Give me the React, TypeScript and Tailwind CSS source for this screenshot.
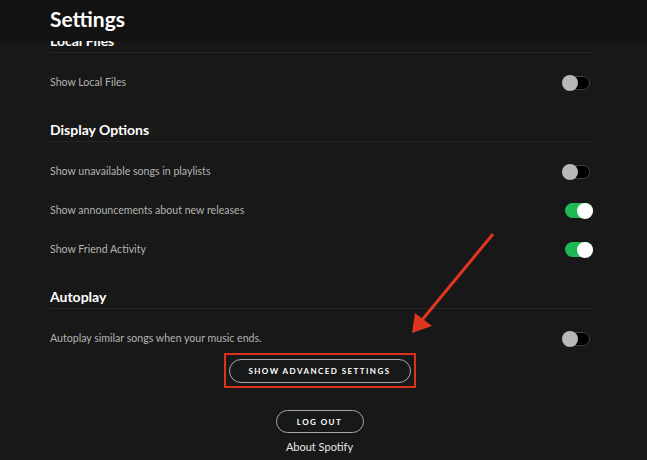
import React from "react";

const Toggle = ({ on }: { on: boolean }) =>
  on ? (
    <div className="relative w-[28px] h-[15px] rounded-full bg-[#1db954]">
      <div className="absolute right-0 top-[-0.5px] w-[16px] h-[16px] rounded-full bg-white" />
    </div>
  ) : (
    <div className="relative mr-[3px] w-[27px] h-[14px] rounded-full bg-black border border-[#3e3e3e]">
      <div className="absolute left-[-2px] top-[-2px] w-[16px] h-[16px] rounded-full bg-[#b8b8b8]" />
    </div>
  );

const Heading = ({ title, className = "" }: { title: string; className?: string }) => (
  <div className={`border-b border-[#262626] pb-[2px] ${className}`}>
    <h2 className="text-[14px] leading-[18px] font-bold text-white">{title}</h2>
  </div>
);

const Row = ({ label, on }: { label: string; on: boolean }) => (
  <div className="flex items-center justify-between h-[39px]">
    <span className="text-[10.6px] text-[#b3b3b3]">{label}</span>
    <Toggle on={on} />
  </div>
);

export default function App() {
  return (
    <div
      className="relative w-[647px] h-[460px] overflow-hidden bg-[#181818]"
      style={{ fontFamily: "Lato, 'Noto Sans', sans-serif" }}
    >
      {/* header */}
      <div className="relative z-10 h-[41px] bg-[#121212] px-[50px] flex items-center">
        <h1 className="text-[21px] font-bold text-white leading-none -mt-[4px]">Settings</h1>
      </div>

      {/* scrolled list */}
      <div className="-mt-[9px] pl-[50px] pr-[54px]">
        <Heading title="Local Files" />
        <div className="mt-[10px]">
          <Row label="Show Local Files" on={false} />
        </div>

        <Heading title="Display Options" className="mt-[19px]" />
        <div className="mt-[10px]">
          <Row label="Show unavailable songs in playlists" on={false} />
          <Row label="Show announcements about new releases" on={true} />
          <Row label="Show Friend Activity" on={true} />
        </div>

        <Heading title="Autoplay" className="mt-[19px]" />
        <div className="mt-[10px]">
          <Row label="Autoplay similar songs when your music ends." on={false} />
        </div>
      </div>

      {/* buttons */}
      <div className="-mt-[5px] pr-[8px] flex flex-col items-center">
        <div className="w-[192px] h-[35px] border-2 border-[#d9321f] flex items-center justify-center">
          <button className="w-[182px] h-[24px] rounded-full border-[1.5px] border-[#a7a7a7] text-white text-[8px] font-bold tracking-[0.18em]">
            SHOW ADVANCED SETTINGS
          </button>
        </div>
        <button className="mt-[22px] w-[88px] h-[23px] rounded-full border-[1.5px] border-[#a7a7a7] text-white text-[8px] font-bold tracking-[0.18em]">
          LOG OUT
        </button>
        <span className="mt-[6px] text-[11px] text-[#e6e6e6]">About Spotify</span>
      </div>

      {/* annotation arrow */}
      <svg className="absolute left-0 top-0 pointer-events-none" width="647" height="460">
        <line x1="493" y1="234" x2="422" y2="320" stroke="#e0361f" strokeWidth="3" />
        <polygon points="412,333 415,313 432,326" fill="#e0361f" />
      </svg>
    </div>
  );
}
